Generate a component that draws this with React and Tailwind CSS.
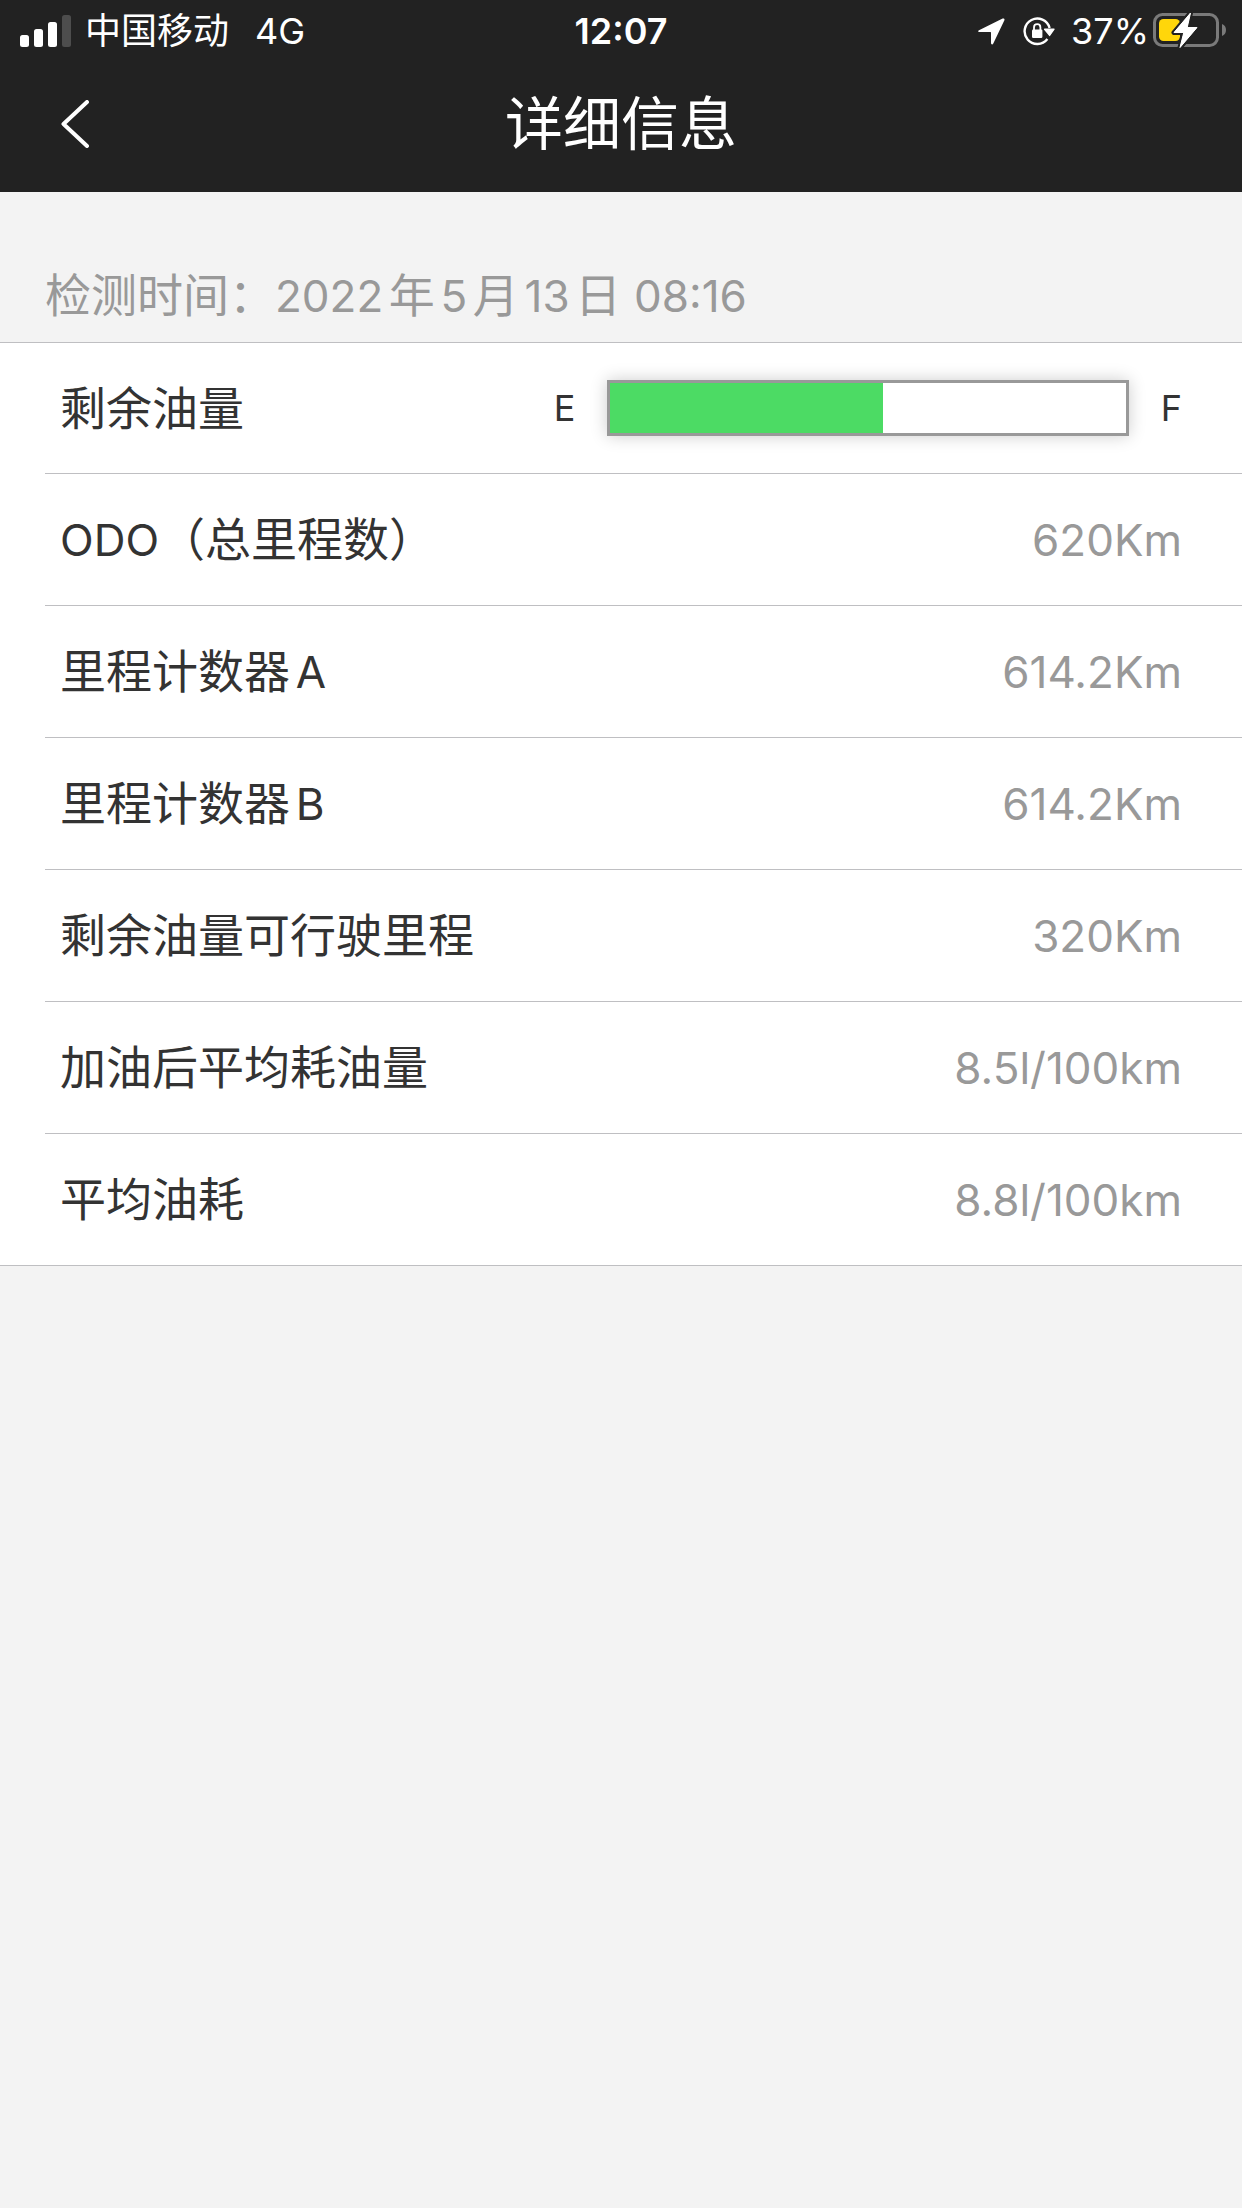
const readings = [
  { prefix: "ODO", label: "（总里程数）", value: "620Km" },
  { label: "里程计数器", suffix: "A", value: "614.2Km" },
  { label: "里程计数器", suffix: "B", value: "614.2Km" },
  { label: "剩余油量可行驶里程", value: "320Km" },
  { label: "加油后平均耗油量", value: "8.5l/100km" },
  { label: "平均油耗", value: "8.8l/100km" },
];

const fuelLevel = 53;

function SignalIcon() {
  return (
    <svg width="51" height="32" viewBox="0 0 51 32" fill="#fff" aria-hidden="true">
      <rect x="0" y="20" width="9" height="12" rx="2.5" />
      <rect x="14" y="14" width="9" height="18" rx="2.5" />
      <rect x="28" y="7" width="9" height="25" rx="2.5" />
      <rect x="42" y="0" width="9" height="32" rx="2.5" fill="#4d4d4d" />
    </svg>
  );
}

function LocationIcon() {
  return (
    <svg width="27" height="27" viewBox="0 0 27 27" fill="#fff" aria-hidden="true">
      <path d="M1 12.2 24.6 0.6c1.3-.6 2.3.4 1.8 1.7L15.3 25.6c-.7 1.4-2.3 1-2.3-.5V14.6c0-.4-.2-.6-.6-.6H1.5C0 14-.4 12.9 1 12.2Z" />
    </svg>
  );
}

function RotationLockIcon() {
  return (
    <svg width="32" height="30" viewBox="0 0 32 30" fill="none" stroke="#fff" aria-hidden="true">
      <path d="M26.6 12A12.7 12.7 0 1 0 24.4 23" strokeWidth="2.4" />
      <path d="M21.6 13.2h9.4L26.6 19.4Z" fill="#fff" strokeWidth="1.4" strokeLinejoin="round" />
      <rect x="9" y="13.5" width="10.4" height="8.5" rx="1.2" fill="#fff" stroke="none" />
      <path d="M11 14v-2.6a3.2 3.2 0 0 1 6.4 0V14" strokeWidth="1.8" />
    </svg>
  );
}

function BatteryIcon() {
  return (
    <svg width="73" height="36" viewBox="0 0 73 36" aria-hidden="true">
      <rect x="1.5" y="1.5" width="63" height="31" rx="8" fill="none" stroke="#7a7a7a" strokeWidth="3" />
      <path d="M69 11c2.6.8 4 3.2 4 6s-1.4 5.2-4 6Z" fill="#7a7a7a" />
      <rect x="6" y="6" width="21" height="22" rx="4.5" fill="#ffd60a" />
      <path
        d="M37.5 0 21 19.5h9.8L27 34.5 44 14.5h-9.8Z"
        fill="#fff"
        stroke="#222"
        strokeWidth="5"
        strokeLinejoin="round"
        paintOrder="stroke"
      />
      <path
        d="M37.5 0 21 19.5h9.8L27 34.5 44 14.5h-9.8Z"
        fill="#fff"
        stroke="#fff"
        strokeWidth="1"
        strokeLinejoin="round"
      />
    </svg>
  );
}

function StatusBar() {
  return (
    <div className="grid h-15.5 grid-cols-[1fr_auto_1fr] items-center px-4 text-4xl leading-none">
      <div className="flex items-center pl-1">
        <SignalIcon />
        <span className="ml-3.5">中国移动</span>
        <span className="ml-6.5">4G</span>
      </div>
      <div className="font-semibold">12:07</div>
      <div className="flex items-center justify-end">
        <LocationIcon />
        <span className="ml-4.5">
          <RotationLockIcon />
        </span>
        <span className="mr-1 ml-4">37%</span>
        <BatteryIcon />
      </div>
    </div>
  );
}

function NavBar() {
  return (
    <div className="grid h-31 grid-cols-[1fr_auto_1fr] items-center px-12">
      <button type="button" aria-label="返回" className="flex h-20 w-20 items-center pl-3">
        <svg width="30" height="48" viewBox="0 0 30 48" fill="none" aria-hidden="true">
          <path d="M27 2 3.5 24l23.5 22" stroke="#fff" strokeWidth="4" strokeLinecap="round" strokeLinejoin="round" />
        </svg>
      </button>
      <h1 className="text-[58px] leading-none">详细信息</h1>
    </div>
  );
}

function Latin({ children }) {
  return <span className="text-[44px] leading-none">{children}</span>;
}

function FuelGauge() {
  return (
    <div className="flex w-[56%] items-center justify-between text-4xl">
      <span>E</span>
      <div
        role="meter"
        aria-label="剩余油量"
        aria-valuemin={0}
        aria-valuemax={100}
        aria-valuenow={fuelLevel}
        className="mx-8 h-14 grow border-3 border-[#999] bg-white shadow-[0_0_16px_rgba(0,0,0,0.2)]"
      >
        <div className="h-full bg-[#4cdb64]" style={{ width: `${fuelLevel}%` }} />
      </div>
      <span>F</span>
    </div>
  );
}

function App() {
  return (
    <div
      lang="zh-CN"
      className="min-h-screen bg-[#f3f3f3] font-['Inter','Noto_Sans_CJK_SC',sans-serif] text-[#333] [text-autospace:normal]"
    >
      <header className="bg-[#222] pb-1.5 text-white">
        <StatusBar />
        <NavBar />
      </header>

      <main>
        <p className="px-[45px] pt-17.5 pb-3.5 text-[46px] leading-[66px] text-[#999]">
          检测时间：<Latin>2022</Latin>年<Latin>5</Latin>月<Latin>13</Latin>日 <Latin>08:16</Latin>
        </p>

        <section className="border-y border-[#bfbfc2] bg-white pl-[45px]">
          <div className="flex h-[131px] items-center justify-between border-b border-[#bfbfc2] pr-15 pl-[15px]">
            <span className="text-[46px]">剩余油量</span>
            <FuelGauge />
          </div>

          <dl className="divide-y divide-[#bfbfc2]">
            {readings.map((item) => (
              <div
                key={item.label + (item.suffix || "")}
                className="flex h-33 items-center justify-between pr-15 pl-[15px] text-[46px] last:h-[131px]"
              >
                <dt>
                  {item.prefix && <Latin>{item.prefix}</Latin>}
                  {item.label}
                  {item.suffix && <Latin>{item.suffix}</Latin>}
                </dt>
                <dd className="text-[44px] text-[#999]">{item.value}</dd>
              </div>
            ))}
          </dl>
        </section>
      </main>
    </div>
  );
}

export default App;
